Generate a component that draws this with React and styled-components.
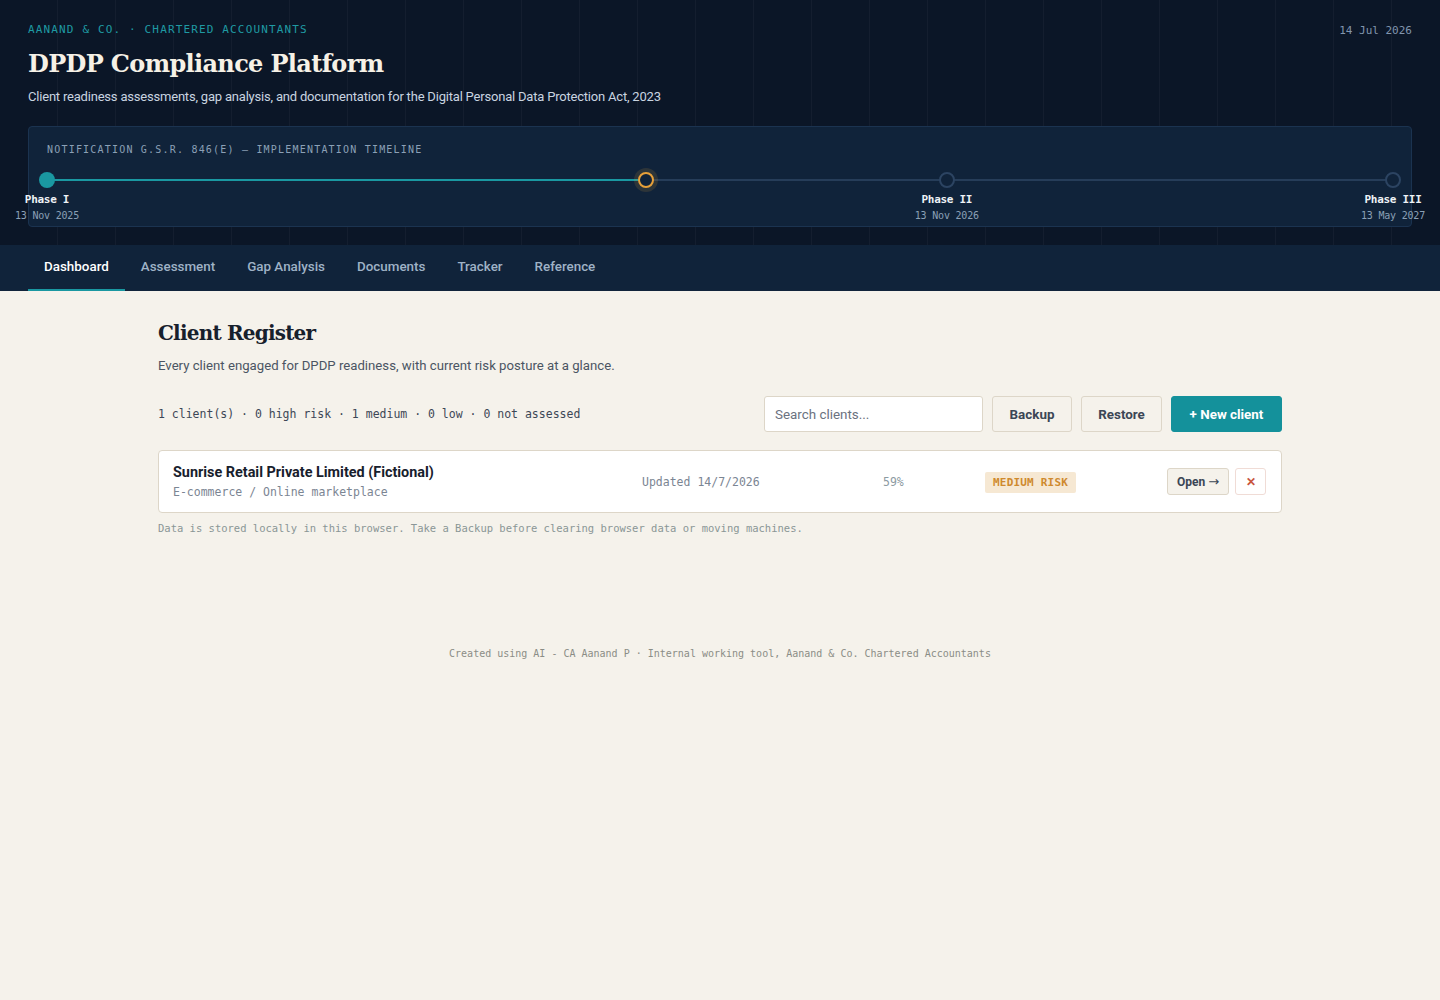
import styled, { createGlobalStyle } from "styled-components";

const GlobalStyle = createGlobalStyle`
  html, body {
    margin: 0;
    padding: 0;
    background: #f5f2eb;
  }
  body {
    font-family: Roboto, "Noto Sans", sans-serif;
    color: #1b2533;
  }
  * { box-sizing: border-box; }
`;

const MONO = `"DejaVu Sans Mono", "Liberation Mono", monospace`;
const SERIF = `"DejaVu Serif", "Liberation Serif", serif`;

// timeline dates
const START = new Date(2025, 10, 13);
const END = new Date(2027, 4, 13);
const TODAY = new Date(2026, 6, 14);
const frac = (d) => (d - START) / (END - START);

const phases = [
  { name: "Phase I", date: "13 Nov 2025", at: new Date(2025, 10, 13), state: "done" },
  { name: "Phase II", date: "13 Nov 2026", at: new Date(2026, 10, 13), state: "next" },
  { name: "Phase III", date: "13 May 2027", at: new Date(2027, 4, 13), state: "next" },
];

const tabs = ["Dashboard", "Assessment", "Gap Analysis", "Documents", "Tracker", "Reference"];

const Header = styled.header`
  background-color: #0b1627;
  background-image: linear-gradient(90deg, rgba(255, 255, 255, 0.035) 1px, transparent 1px);
  background-size: 58px 100%;
  background-position: -1px 0;
  padding: 23px 28px 18px;
`;

const TopRow = styled.div`
  display: flex;
  justify-content: space-between;
  align-items: flex-start;
`;

const Firm = styled.div`
  font-family: ${MONO};
  font-size: 11px;
  letter-spacing: 1.15px;
  color: #1f9aa3;
  text-transform: uppercase;
`;

const Today = styled.div`
  font-family: ${MONO};
  font-size: 11px;
  color: #8195ad;
  margin-top: 1px;
`;

const Title = styled.h1`
  font-family: ${SERIF};
  font-weight: 700;
  font-size: 24px;
  letter-spacing: -0.65px;
  color: #f6f1e6;
  margin: 12px 0 11px;
`;

const Lead = styled.p`
  font-size: 13px;
  letter-spacing: -0.2px;
  color: #c9d4e0;
  margin: 0 0 22px;
`;

const TimelineCard = styled.section`
  background: #10233a;
  border: 1px solid #1b3350;
  border-radius: 4px;
  padding: 17px 18px 0;
  height: 101px;
`;

const TimelineLabel = styled.div`
  font-family: ${MONO};
  font-size: 10px;
  letter-spacing: 1.2px;
  color: #8ba0b6;
  text-transform: uppercase;
`;

const Track = styled.div`
  position: relative;
  margin-top: 24px;
  height: 2px;
  background: #263d59;
`;

const Progress = styled.div`
  position: absolute;
  left: 0;
  top: 0;
  height: 2px;
  background: #1a98a1;
`;

const Marker = styled.div`
  position: absolute;
  top: 1px;
  transform: translate(-50%, -50%);
  display: flex;
  flex-direction: column;
  align-items: center;
`;

const Dot = styled.span`
  width: 16px;
  height: 16px;
  border-radius: 50%;
  ${({ $state }) =>
    $state === "done"
      ? `background: #1a98a1;`
      : $state === "now"
      ? `background: #10233a; border: 2px solid #e6a03a; box-shadow: 0 0 0 4px rgba(230, 160, 58, 0.14);`
      : `background: #10233a; border: 2px solid #2c4462;`}
`;

const MarkerText = styled.div`
  position: absolute;
  top: 21px;
  left: 50%;
  transform: translateX(-50%);
  text-align: center;
  white-space: nowrap;
  font-family: ${MONO};
`;

const PhaseName = styled.div`
  font-size: 11px;
  font-weight: 700;
  color: #eef2f6;
  letter-spacing: -0.3px;
`;

const PhaseDate = styled.div`
  font-size: 10px;
  color: #8ba0b6;
  margin-top: 4px;
  letter-spacing: -0.2px;
`;

const Nav = styled.nav`
  background: #10233a;
  display: flex;
  padding: 0 28px;
  height: 46px;
`;

const Tab = styled.a`
  display: flex;
  align-items: center;
  padding: 0 16px 1px;
  font-size: 13.4px;
  font-weight: 500;
  color: ${({ $active }) => ($active ? "#ffffff" : "#9fb2c6")};
  border-bottom: 2px solid ${({ $active }) => ($active ? "#1a98a1" : "transparent")};
  cursor: pointer;
`;

const Main = styled.main`
  max-width: 1124px;
  margin: 0 auto;
  padding: 30px 0 0;
`;

const PageTitle = styled.h2`
  font-family: ${SERIF};
  font-weight: 700;
  font-size: 20px;
  letter-spacing: -0.8px;
  margin: 0 0 13px;
  color: #17202c;
`;

const PageLead = styled.p`
  font-size: 13.2px;
  color: #4b5563;
  margin: 0 0 23px;
`;

const Toolbar = styled.div`
  display: flex;
  align-items: center;
  justify-content: space-between;
  margin-bottom: 18px;
`;

const Stats = styled.div`
  font-family: ${MONO};
  font-size: 11.5px;
  color: #3d4756;
`;

const Actions = styled.div`
  display: flex;
  gap: 9px;
  align-items: center;
`;

const Search = styled.input`
  width: 219px;
  height: 36px;
  border: 1px solid #ddd6c8;
  border-radius: 3px;
  background: #fff;
  padding: 0 10px;
  font-family: Roboto, sans-serif;
  font-size: 13.4px;
  color: #1b2533;
  &::placeholder { color: #6b7280; }
  &:focus { outline: none; }
`;

const Button = styled.button`
  height: 36px;
  padding: 0 16px;
  border-radius: 3px;
  font-family: Roboto, sans-serif;
  font-size: 13.4px;
  font-weight: 700;
  cursor: pointer;
  border: 1px solid ${({ $primary }) => ($primary ? "#14919b" : "#ddd6c8")};
  background: ${({ $primary }) => ($primary ? "#14919b" : "#f5f2eb")};
  color: ${({ $primary }) => ($primary ? "#ffffff" : "#3b4655")};
  min-width: ${({ $w }) => $w || 0}px;
`;

const ClientRow = styled.div`
  display: grid;
  grid-template-columns: 1fr 241px 102px 182px 99px;
  align-items: center;
  background: #fff;
  border: 1px solid #ddd6c8;
  border-radius: 4px;
  padding: 0 15px 0 14px;
  height: 63px;
`;

const ClientName = styled.div`
  font-size: 14.4px;
  font-weight: 700;
  color: #17202c;
`;

const ClientSector = styled.div`
  font-family: ${MONO};
  font-size: 11.5px;
  color: #7b8593;
  margin-top: 4px;
`;

const Cell = styled.div`
  font-family: ${MONO};
  font-size: 11.5px;
  color: ${({ $light }) => ($light ? "#8c9aa2" : "#7b8593")};
`;

const Badge = styled.span`
  display: inline-block;
  font-family: ${MONO};
  font-size: 11px;
  font-weight: 700;
  letter-spacing: 0.2px;
  color: #cf8a2e;
  background: #f6e8d3;
  border-radius: 2px;
  padding: 4px 8px;
`;

const RowActions = styled.div`
  display: flex;
  justify-content: flex-end;
  gap: 6px;
`;

const SmallButton = styled.button`
  height: 27px;
  min-width: ${({ $danger }) => ($danger ? 31 : 62)}px;
  padding: 0 9px;
  border-radius: 3px;
  border: 1px solid ${({ $danger }) => ($danger ? "#f0dcd6" : "#ddd6c8")};
  background: ${({ $danger }) => ($danger ? "#fff" : "#f5f2eb")};
  color: ${({ $danger }) => ($danger ? "#c8553d" : "#3b4655")};
  font-family: Roboto, sans-serif;
  font-size: 12px;
  font-weight: 700;
  white-space: nowrap;
  display: flex;
  align-items: center;
  justify-content: center;
  gap: 3px;
  cursor: pointer;
`;

const Arrow = styled.span`
  font-family: "DejaVu Sans", sans-serif;
  font-weight: 400;
  font-size: 13px;
`;

const Note = styled.p`
  font-family: ${MONO};
  font-size: 10.5px;
  color: #8a9696;
  margin: 9px 0 0;
`;

const Footer = styled.footer`
  text-align: center;
  font-family: ${MONO};
  font-size: 10px;
  color: #8b8d86;
  padding: 114px 0 0;
`;

function Timeline() {
  const now = frac(TODAY);
  return (
    <TimelineCard>
      <TimelineLabel>Notification G.S.R. 846(E) — Implementation Timeline</TimelineLabel>
      <Track>
        <Progress style={{ width: `${now * 100}%` }} />
        {phases.map((p) => (
          <Marker key={p.name} style={{ left: `${frac(p.at) * 100}%` }}>
            <Dot $state={p.state} />
            <MarkerText>
              <PhaseName>{p.name}</PhaseName>
              <PhaseDate>{p.date}</PhaseDate>
            </MarkerText>
          </Marker>
        ))}
        <Marker style={{ left: `${now * 100}%` }}>
          <Dot $state="now" />
        </Marker>
      </Track>
    </TimelineCard>
  );
}

export default function App() {
  return (
    <>
      <GlobalStyle />
      <Header>
        <TopRow>
          <Firm>Aanand &amp; Co. · Chartered Accountants</Firm>
          <Today>14 Jul 2026</Today>
        </TopRow>
        <Title>DPDP Compliance Platform</Title>
        <Lead>
          Client readiness assessments, gap analysis, and documentation for the Digital Personal Data Protection Act, 2023
        </Lead>
        <Timeline />
      </Header>
      <Nav>
        {tabs.map((t, i) => (
          <Tab key={t} $active={i === 0}>
            {t}
          </Tab>
        ))}
      </Nav>
      <Main>
        <PageTitle>Client Register</PageTitle>
        <PageLead>Every client engaged for DPDP readiness, with current risk posture at a glance.</PageLead>
        <Toolbar>
          <Stats>1 client(s) · 0 high risk · 1 medium · 0 low · 0 not assessed</Stats>
          <Actions>
            <Search placeholder="Search clients..." />
            <Button $w={80}>Backup</Button>
            <Button $w={81}>Restore</Button>
            <Button $primary $w={111}>+ New client</Button>
          </Actions>
        </Toolbar>
        <ClientRow>
          <div>
            <ClientName>Sunrise Retail Private Limited (Fictional)</ClientName>
            <ClientSector>E-commerce / Online marketplace</ClientSector>
          </div>
          <Cell>Updated 14/7/2026</Cell>
          <Cell $light>59%</Cell>
          <div>
            <Badge>MEDIUM RISK</Badge>
          </div>
          <RowActions>
            <SmallButton>
              Open<Arrow>→</Arrow>
            </SmallButton>
            <SmallButton $danger>✕</SmallButton>
          </RowActions>
        </ClientRow>
        <Note>Data is stored locally in this browser. Take a Backup before clearing browser data or moving machines.</Note>
        <Footer>Created using AI - CA Aanand P · Internal working tool, Aanand &amp; Co. Chartered Accountants</Footer>
      </Main>
    </>
  );
}
